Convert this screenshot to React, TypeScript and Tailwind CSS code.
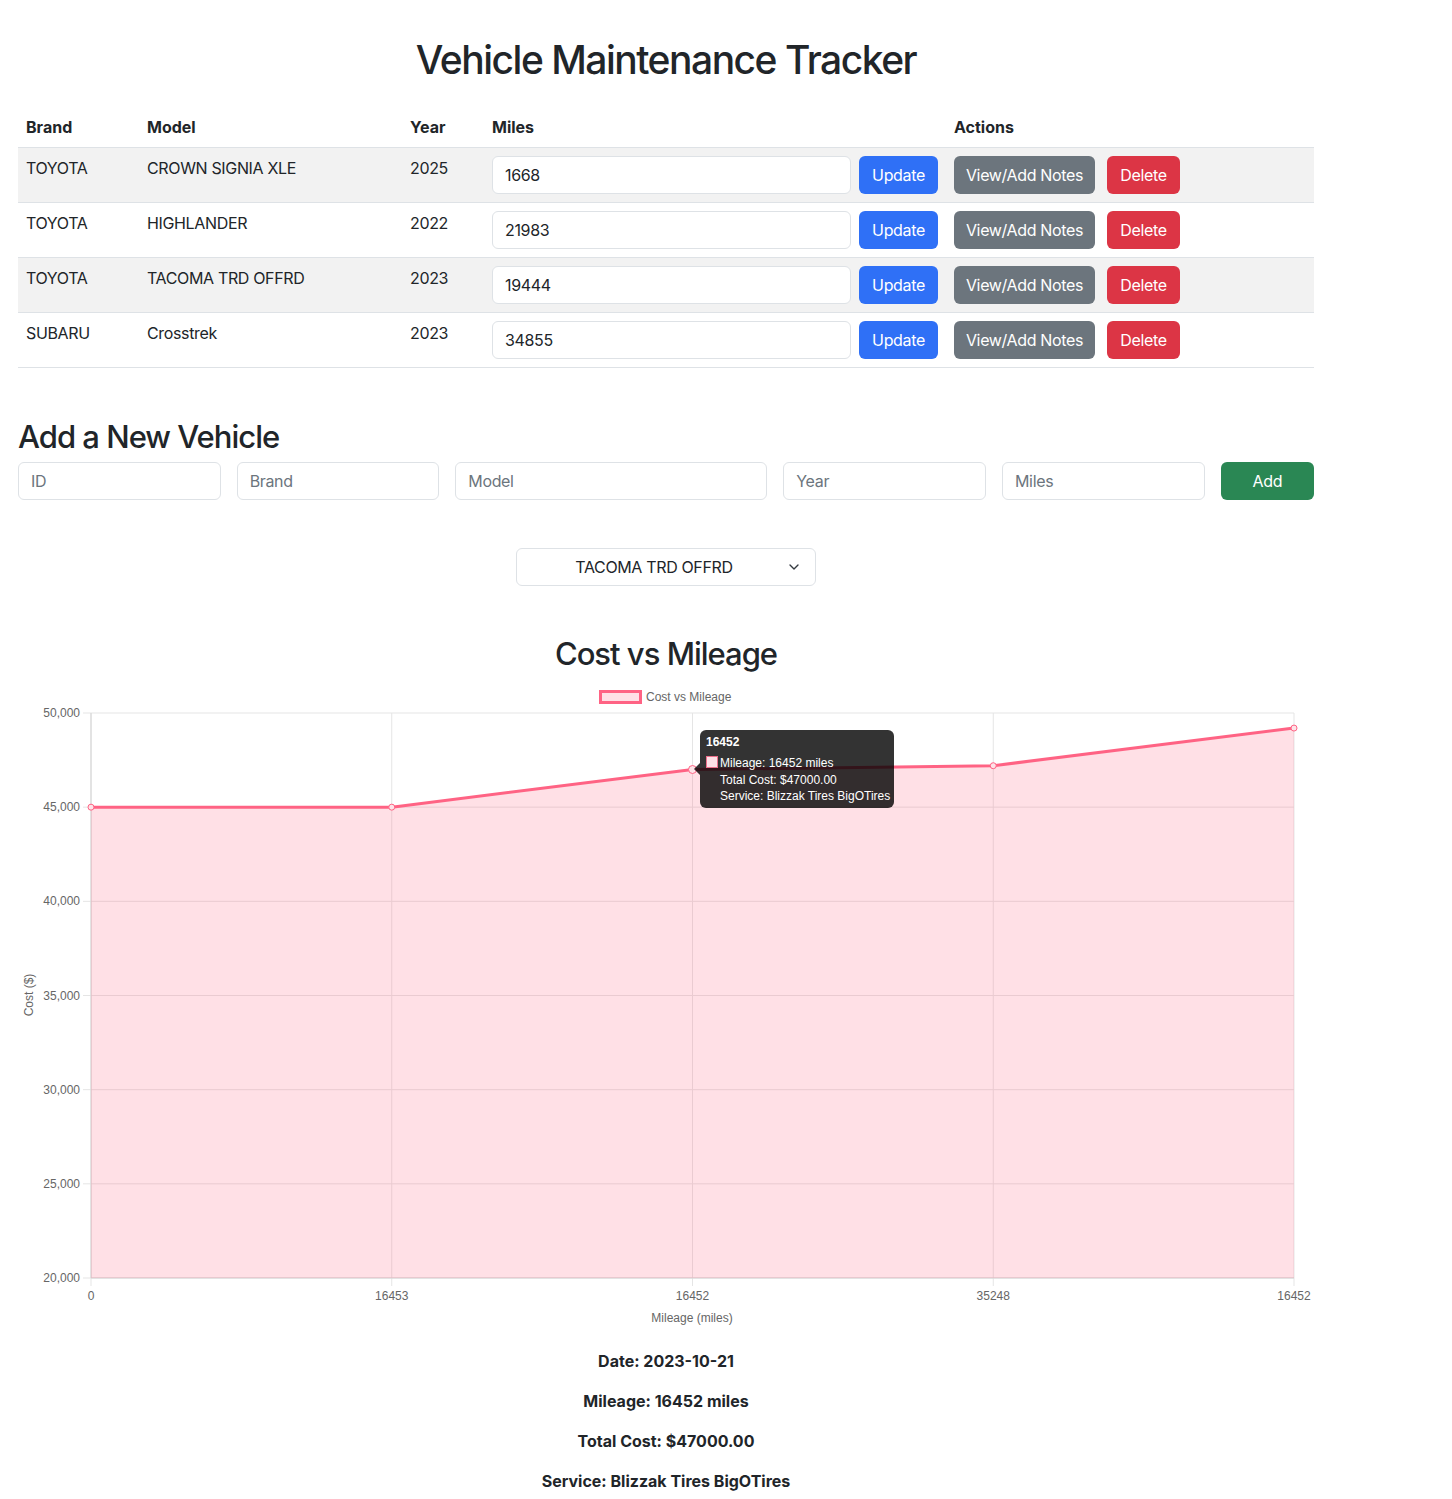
import { ChevronDown } from 'lucide-react';

interface Vehicle {
  brand: string;
  model: string;
  year: number;
  miles: string;
}

const vehicles: Vehicle[] = [
  { brand: 'TOYOTA', model: 'CROWN SIGNIA XLE', year: 2025, miles: '1668' },
  { brand: 'TOYOTA', model: 'HIGHLANDER', year: 2022, miles: '21983' },
  { brand: 'TOYOTA', model: 'TACOMA TRD OFFRD', year: 2023, miles: '19444' },
  { brand: 'SUBARU', model: 'Crosstrek', year: 2023, miles: '34855' },
];

const records = [
  { label: '0', cost: 45000 },
  { label: '16453', cost: 45000 },
  { label: '16452', cost: 47000 },
  { label: '35248', cost: 47200 },
  { label: '16452', cost: 49200 },
];

// plot area, in page coordinates (the svg viewBox starts at the container origin)
const LEFT = 91;
const RIGHT = 1294;
const TOP = 713;
const BOTTOM = 1278;
const yFor = (v: number) => TOP + ((50000 - v) / 30000) * (BOTTOM - TOP);
const xFor = (i: number) => LEFT + (i * (RIGHT - LEFT)) / (records.length - 1);

const inputCls =
  'h-[38px] w-full rounded-md border border-[#dee2e6] bg-white px-3 text-base tracking-[-0.35px] text-[#212529] placeholder:text-[#6c757d] outline-none';

function CostChart() {
  const ticks = [50000, 45000, 40000, 35000, 30000, 25000, 20000];
  const pts = records.map((r, i) => ({ x: xFor(i), y: yFor(r.cost) }));
  const line = pts.map((p, i) => `${i ? 'L' : 'M'}${p.x} ${p.y}`).join(' ');
  const area = `${line} L${RIGHT} ${BOTTOM} L${LEFT} ${BOTTOM} Z`;
  const font = "'Liberation Sans', Arial, sans-serif";

  return (
    <svg viewBox="18 681 1296 652" width={1296} height={652} className="mt-2 block">
      {/* legend */}
      <rect x={600.5} y={691.5} width={40} height={11} fill="rgba(255,99,132,0.2)" stroke="#ff6384" strokeWidth={3} />
      <text x={646} y={701} fontSize={12} fill="#666" fontFamily={font}>Cost vs Mileage</text>

      {/* grid */}
      {ticks.map((t) => (
        <g key={t}>
          <line x1={83} x2={RIGHT} y1={yFor(t)} y2={yFor(t)} stroke="#e5e5e5" strokeWidth={1} />
          <text x={80} y={yFor(t) + 4} fontSize={12} fill="#666" textAnchor="end" fontFamily={font}>
            {t.toLocaleString('en-US')}
          </text>
        </g>
      ))}
      {records.map((r, i) => (
        <g key={i}>
          <line x1={xFor(i)} x2={xFor(i)} y1={TOP} y2={BOTTOM + 8} stroke="#e5e5e5" strokeWidth={1} />
          <text x={xFor(i)} y={1300} fontSize={12} fill="#666" textAnchor="middle" fontFamily={font}>
            {r.label}
          </text>
        </g>
      ))}
      <line x1={LEFT} x2={LEFT} y1={TOP} y2={BOTTOM} stroke="#d4d4d4" />
      <line x1={LEFT} x2={RIGHT} y1={BOTTOM} y2={BOTTOM} stroke="#d4d4d4" />

      {/* axis titles */}
      <text x={692} y={1322} fontSize={12} fill="#666" textAnchor="middle" fontFamily={font}>Mileage (miles)</text>
      <text
        x={0}
        y={0}
        fontSize={12}
        fill="#666"
        textAnchor="middle"
        fontFamily={font}
        transform="translate(33 995) rotate(-90)"
      >
        Cost ($)
      </text>

      {/* dataset */}
      <path d={area} fill="rgba(255,99,132,0.2)" />
      <path d={line} fill="none" stroke="#ff6384" strokeWidth={3} strokeLinejoin="round" />
      {pts.map((p, i) => (
        <circle
          key={i}
          cx={p.x}
          cy={p.y}
          r={i === 2 ? 4 : 3}
          fill="#fde3e8"
          stroke="#ff6384"
          strokeWidth={1}
        />
      ))}

      {/* tooltip */}
      <polygon points="700,763 694,769 700,775" fill="rgba(0,0,0,0.8)" />
      <rect x={700} y={730} width={194} height={78} rx={6} fill="rgba(0,0,0,0.8)" />
      <text x={706} y={746} fontSize={12} fontWeight="bold" fill="#fff" fontFamily={font}>16452</text>
      <rect x={706} y={756} width={12} height={12} fill="#fff" />
      <rect x={706.5} y={756.5} width={11} height={11} fill="#fde0e6" stroke="#ec6f8a" strokeWidth={1} />
      <text x={720} y={767} fontSize={12} fill="#fff" fontFamily={font}>Mileage: 16452 miles</text>
      <text x={720} y={784} fontSize={12} fill="#fff" fontFamily={font}>Total Cost: $47000.00</text>
      <text x={720} y={800} fontSize={12} fill="#fff" fontFamily={font}>Service: Blizzak Tires BigOTires</text>
    </svg>
  );
}

export default function App() {
  return (
    <div className="min-h-screen bg-white font-['Inter',sans-serif] text-base leading-6 text-[#212529]">
      <div className="ml-[18px] w-[1296px] pt-[36px] pb-4">
        <h1 className="mb-[23px] text-center text-[39px] leading-[48px] font-medium tracking-[-1.5px]">
          Vehicle Maintenance Tracker
        </h1>

        <table className="w-full table-fixed border-collapse">
          <colgroup>
            <col className="w-[121px]" />
            <col className="w-[263px]" />
            <col className="w-[82px]" />
            <col className="w-[462px]" />
            <col className="w-[368px]" />
          </colgroup>
          <thead>
            <tr className="border-b border-[#dee2e6]">
              <th className="p-2 text-left font-bold">Brand</th>
              <th className="p-2 text-left font-bold">Model</th>
              <th className="p-2 text-left font-bold">Year</th>
              <th className="p-2 text-left font-bold">Miles</th>
              <th className="p-2 text-left font-bold">Actions</th>
            </tr>
          </thead>
          <tbody className="tracking-[-0.35px]">
            {vehicles.map((v, i) => (
              <tr key={v.model} className={`border-b border-[#dee2e6] align-top ${i % 2 === 0 ? 'bg-[#f2f2f2]' : 'bg-white'}`}>
                <td className="p-2">{v.brand}</td>
                <td className="p-2">{v.model}</td>
                <td className="p-2">{v.year}</td>
                <td className="p-2">
                  <div className="flex gap-2">
                    <input className={inputCls} defaultValue={v.miles} />
                    <button className="h-[38px] w-[79px] shrink-0 rounded-md bg-[#2f70f6] text-white">Update</button>
                  </div>
                </td>
                <td className="p-2">
                  <div className="flex gap-3">
                    <button className="h-[38px] w-[141px] rounded-md bg-[#6c757d] text-white">View/Add Notes</button>
                    <button className="h-[38px] w-[73px] rounded-md bg-[#dc3545] text-white">Delete</button>
                  </div>
                </td>
              </tr>
            ))}
          </tbody>
        </table>

        <h2 className="mt-[50px] text-[31px] leading-[38px] font-medium tracking-[-1px]">Add a New Vehicle</h2>
        <div className="mt-[6px] grid grid-cols-12 gap-4">
          <input className={`${inputCls} col-span-2`} placeholder="ID" />
          <input className={`${inputCls} col-span-2`} placeholder="Brand" />
          <input className={`${inputCls} col-span-3`} placeholder="Model" />
          <input className={`${inputCls} col-span-2`} placeholder="Year" />
          <input className={`${inputCls} col-span-2`} placeholder="Miles" />
          <button className="col-span-1 h-[38px] rounded-md bg-[#2a8754] tracking-[-0.35px] text-white">Add</button>
        </div>

        <div className="mt-12 flex justify-center">
          <div className="relative w-[300px]">
            <select
              className="h-[38px] w-full appearance-none rounded-md border border-[#dee2e6] bg-white pr-9 pl-3 text-center text-base tracking-[-0.35px] text-[#212529] outline-none [text-align-last:center]"
              defaultValue="TACOMA TRD OFFRD"
            >
              {vehicles.map((v) => (
                <option key={v.model}>{v.model}</option>
              ))}
            </select>
            <ChevronDown className="pointer-events-none absolute top-[11px] right-[14px] h-4 w-4 text-[#343a40]" strokeWidth={2} />
          </div>
        </div>

        <h2 className="mt-[49px] text-center text-[31px] leading-[38px] font-medium tracking-[-1px]">Cost vs Mileage</h2>
        <CostChart />

        <div className="mt-4 text-center font-bold">
          <p className="mb-4">Date: 2023-10-21</p>
          <p className="mb-4">Mileage: 16452 miles</p>
          <p className="mb-4">Total Cost: $47000.00</p>
          <p className="mb-4">Service: Blizzak Tires BigOTires</p>
        </div>
      </div>
    </div>
  );
}
